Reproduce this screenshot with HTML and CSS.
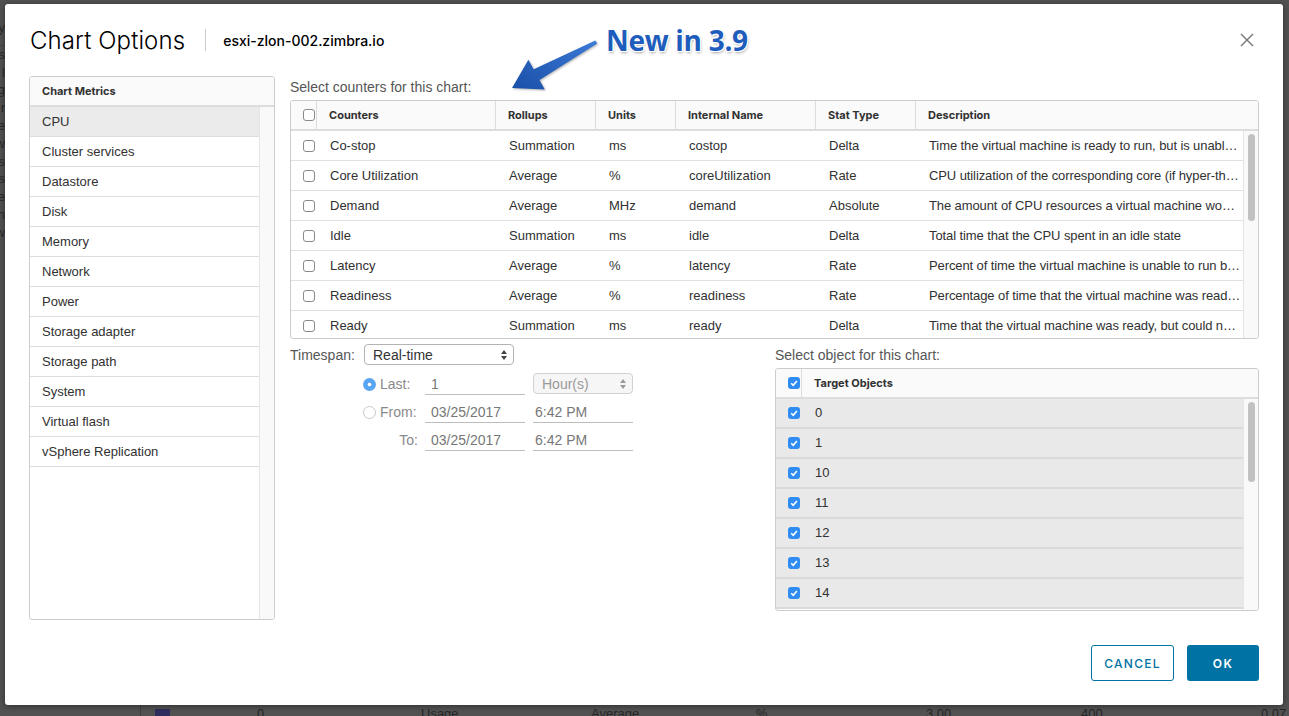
FILE: index.html
```html
<!DOCTYPE html>
<html lang="en">

<head>
    <meta charset="UTF-8">
    <title>Chart Options</title>
    <link rel="stylesheet" href="styles.css">
</head>

<body>
    <!-- page behind the dialog -->
    <div class="page">
        <div class="page-nav">
            <span class="nav-top">y</span>
            <span>s</span><span>l</span><span>g</span><span>r</span><span>e</span><span>w</span>
            <span>s</span><span>s</span><span>e</span><span>n</span><span>w</span>
        </div>
        <div class="page-row">
            <span><i class="swatch"></i></span>
            <span>0</span>
            <span>Usage</span>
            <span>Average</span>
            <span>%</span>
            <span>3.00</span>
            <span>400</span>
            <span>0.07</span>
        </div>
    </div>

    <div class="modal">
        <div class="modal-header">
            <h1>Chart Options</h1>
            <span class="divider"></span>
            <span class="host">esxi-zlon-002.zimbra.io</span>
            <span class="close">
                <svg width="14" height="14" viewBox="0 0 14 14"><path d="M1 1 L13 13 M13 1 L1 13" stroke="#737373" stroke-width="1.4" fill="none"/></svg>
            </span>
        </div>

        <div class="modal-body">
            <div class="metrics">
                <div class="metrics-head">Chart Metrics</div>
                <div class="metrics-body">
                    <ul class="metrics-list">
                        <li class="active">CPU</li>
                        <li>Cluster services</li>
                        <li>Datastore</li>
                        <li>Disk</li>
                        <li>Memory</li>
                        <li>Network</li>
                        <li>Power</li>
                        <li>Storage adapter</li>
                        <li>Storage path</li>
                        <li>System</li>
                        <li>Virtual flash</li>
                        <li>vSphere Replication</li>
                    </ul>
                    <div class="track"></div>
                </div>
            </div>

            <div class="options">
                <div class="section-label">Select counters for this chart:</div>
                <div class="grid counters">
                    <div class="grid-head">
                        <div class="cell"><span class="cb"></span></div>
                        <div class="cell">Counters</div>
                        <div class="cell">Rollups</div>
                        <div class="cell">Units</div>
                        <div class="cell">Internal Name</div>
                        <div class="cell">Stat Type</div>
                        <div class="cell">Description</div>
                    </div>
                    <div class="grid-body">
                        <div class="grid-rows">
                            <div class="row">
                                <div class="cell"><span class="cb"></span></div>
                                <div class="cell">Co-stop</div>
                                <div class="cell">Summation</div>
                                <div class="cell">ms</div>
                                <div class="cell">costop</div>
                                <div class="cell">Delta</div>
                                <div class="cell desc">Time the virtual machine is ready to run, but is unable to run due to co-scheduling constraints</div>
                            </div>
                            <div class="row">
                                <div class="cell"><span class="cb"></span></div>
                                <div class="cell">Core Utilization</div>
                                <div class="cell">Average</div>
                                <div class="cell">%</div>
                                <div class="cell">coreUtilization</div>
                                <div class="cell">Rate</div>
                                <div class="cell desc">CPU utilization of the corresponding core (if hyper-threading is enabled)</div>
                            </div>
                            <div class="row">
                                <div class="cell"><span class="cb"></span></div>
                                <div class="cell">Demand</div>
                                <div class="cell">Average</div>
                                <div class="cell">MHz</div>
                                <div class="cell">demand</div>
                                <div class="cell">Absolute</div>
                                <div class="cell desc">The amount of CPU resources a virtual machine would use if there were no CPU contention</div>
                            </div>
                            <div class="row">
                                <div class="cell"><span class="cb"></span></div>
                                <div class="cell">Idle</div>
                                <div class="cell">Summation</div>
                                <div class="cell">ms</div>
                                <div class="cell">idle</div>
                                <div class="cell">Delta</div>
                                <div class="cell desc">Total time that the CPU spent in an idle state</div>
                            </div>
                            <div class="row">
                                <div class="cell"><span class="cb"></span></div>
                                <div class="cell">Latency</div>
                                <div class="cell">Average</div>
                                <div class="cell">%</div>
                                <div class="cell">latency</div>
                                <div class="cell">Rate</div>
                                <div class="cell desc">Percent of time the virtual machine is unable to run because it is contending for access to the physical CPU(s)</div>
                            </div>
                            <div class="row">
                                <div class="cell"><span class="cb"></span></div>
                                <div class="cell">Readiness</div>
                                <div class="cell">Average</div>
                                <div class="cell">%</div>
                                <div class="cell">readiness</div>
                                <div class="cell">Rate</div>
                                <div class="cell desc">Percentage of time that the virtual machine was ready, but could not get scheduled to run</div>
                            </div>
                            <div class="row">
                                <div class="cell"><span class="cb"></span></div>
                                <div class="cell">Ready</div>
                                <div class="cell">Summation</div>
                                <div class="cell">ms</div>
                                <div class="cell">ready</div>
                                <div class="cell">Delta</div>
                                <div class="cell desc">Time that the virtual machine was ready, but could not get scheduled to run</div>
                            </div>
                        </div>
                        <div class="track"><div class="thumb counters-thumb"></div></div>
                    </div>
                </div>

                <div class="lower">
                    <div class="timespan">
                        <div class="ts-head">
                            <span class="ts-label">Timespan:</span>
                            <span class="select">Real-time
                                <svg width="6" height="10" viewBox="0 0 6 10"><path d="M0 4 L3 0 L6 4 Z M0 6 L3 10 L6 6 Z" fill="#444"/></svg>
                            </span>
                        </div>
                        <div class="ts-row">
                            <span class="opt"><span class="radio on"></span>Last:</span>
                            <span class="field">1</span>
                            <span class="select off">Hour(s)
                                <svg width="6" height="10" viewBox="0 0 6 10"><path d="M0 4 L3 0 L6 4 Z M0 6 L3 10 L6 6 Z" fill="#9a9a9a"/></svg>
                            </span>
                        </div>
                        <div class="ts-row">
                            <span class="opt"><span class="radio"></span>From:</span>
                            <span class="field">03/25/2017</span>
                            <span class="field time">6:42 PM</span>
                        </div>
                        <div class="ts-row">
                            <span class="opt to">To:</span>
                            <span class="field">03/25/2017</span>
                            <span class="field time">6:42 PM</span>
                        </div>
                    </div>

                    <div class="targets">
                        <div class="section-label">Select object for this chart:</div>
                        <div class="grid objects">
                            <div class="grid-head">
                                <div class="cell"><span class="cb checked"><svg width="12" height="12" viewBox="0 0 12 12"><path d="M3.2 6.3 L5.2 8.3 L8.9 3.9" stroke="#fff" stroke-width="1.6" fill="none"/></svg></span></div>
                                <div class="cell">Target Objects</div>
                            </div>
                            <div class="grid-body">
                                <div class="grid-rows">
                                    <div class="row"><div class="cell"><span class="cb checked"><svg width="12" height="12" viewBox="0 0 12 12"><path d="M3.2 6.3 L5.2 8.3 L8.9 3.9" stroke="#fff" stroke-width="1.6" fill="none"/></svg></span></div><div class="cell">0</div></div>
                                    <div class="row"><div class="cell"><span class="cb checked"><svg width="12" height="12" viewBox="0 0 12 12"><path d="M3.2 6.3 L5.2 8.3 L8.9 3.9" stroke="#fff" stroke-width="1.6" fill="none"/></svg></span></div><div class="cell">1</div></div>
                                    <div class="row"><div class="cell"><span class="cb checked"><svg width="12" height="12" viewBox="0 0 12 12"><path d="M3.2 6.3 L5.2 8.3 L8.9 3.9" stroke="#fff" stroke-width="1.6" fill="none"/></svg></span></div><div class="cell">10</div></div>
                                    <div class="row"><div class="cell"><span class="cb checked"><svg width="12" height="12" viewBox="0 0 12 12"><path d="M3.2 6.3 L5.2 8.3 L8.9 3.9" stroke="#fff" stroke-width="1.6" fill="none"/></svg></span></div><div class="cell">11</div></div>
                                    <div class="row"><div class="cell"><span class="cb checked"><svg width="12" height="12" viewBox="0 0 12 12"><path d="M3.2 6.3 L5.2 8.3 L8.9 3.9" stroke="#fff" stroke-width="1.6" fill="none"/></svg></span></div><div class="cell">12</div></div>
                                    <div class="row"><div class="cell"><span class="cb checked"><svg width="12" height="12" viewBox="0 0 12 12"><path d="M3.2 6.3 L5.2 8.3 L8.9 3.9" stroke="#fff" stroke-width="1.6" fill="none"/></svg></span></div><div class="cell">13</div></div>
                                    <div class="row"><div class="cell"><span class="cb checked"><svg width="12" height="12" viewBox="0 0 12 12"><path d="M3.2 6.3 L5.2 8.3 L8.9 3.9" stroke="#fff" stroke-width="1.6" fill="none"/></svg></span></div><div class="cell">14</div></div>
                                </div>
                                <div class="track"><div class="thumb objects-thumb"></div></div>
                            </div>
                        </div>
                    </div>
                </div>
            </div>
        </div>

        <div class="modal-footer">
            <button class="btn btn-outline">CANCEL</button>
            <button class="btn btn-primary">OK</button>
        </div>
    </div>

    <!-- "new" callout drawn over the dialog -->
    <svg class="callout-arrow" viewBox="0 0 1289 716">
        <defs>
            <linearGradient id="arrowFill" x1="1" y1="0" x2="0" y2="1">
                <stop offset="0" stop-color="#3b7bd6"/>
                <stop offset="1" stop-color="#1a4fa8"/>
            </linearGradient>
        </defs>
        <polygon points="595.3,40.4 533.7,69.3 528.4,59.7 512,88 544.8,89.5 539.5,79.9 597.2,43.6" fill="url(#arrowFill)"/>
    </svg>
    <div class="callout-text">New in 3.9</div>
</body>

</html>
```

FILE: styles.css
```css
* {
    box-sizing: border-box;
}

html,
body {
    margin: 0;
    height: 100%;
}

body {
    position: relative;
    overflow: hidden;
    font-family: "Liberation Sans", Arial, sans-serif;
    font-size: 13px;
    color: #313131;
    background: #525252;
}

/* background page */

.page {
    height: 716px;
    display: flex;
    flex-direction: column;
    justify-content: space-between;
}

.page-nav {
    width: 5px;
    overflow: hidden;
    display: flex;
    flex-direction: column;
    align-items: flex-end;
    padding-top: 19px;
    color: #2a2a2a;
    line-height: 17.8px;
}

.page-nav .nav-top {
    padding-bottom: 8px;
    border-bottom: 1px solid #464646;
}

.page-row {
    margin-left: 140px;
    height: 11px;
    border-left: 1px solid #3f3f3f;
    display: grid;
    grid-template-columns: 116px 164px 170px 165px 170px 155px 180px auto;
    color: #262626;
    line-height: 18px;
}

.swatch {
    display: inline-block;
    width: 15px;
    height: 12px;
    margin-left: 14px;
    margin-top: 4px;
    background: #2f2d5e;
}

/* dialog */

.modal {
    position: absolute;
    left: 5px;
    top: 4px;
    width: 1278px;
    height: 701px;
    padding: 0 24px 24px;
    background: #fff;
    border-radius: 3px;
    box-shadow: 0 1px 6px rgba(0, 0, 0, 0.45);
    display: flex;
    flex-direction: column;
}

.modal-header {
    height: 72px;
    flex: none;
    display: flex;
    align-items: center;
    padding-left: 1px;
    font-family: Inter, sans-serif;
}

.modal-header h1 {
    margin: 0;
    font-size: 24px;
    font-weight: 300;
    letter-spacing: 0.1px;
    color: #000;
}

.divider {
    width: 1px;
    height: 22px;
    margin: 0 17px 0 20px;
    background: #ccc;
}

.host {
    font-size: 14px;
    font-weight: 500;
    color: #000;
}

.close {
    margin-left: auto;
    margin-right: 5px;
    display: flex;
}

.modal-body {
    height: 544px;
    flex: none;
    display: flex;
    gap: 15px;
}

/* chart metrics list */

.metrics {
    width: 246px;
    border: 1px solid #ccc;
    border-radius: 3px;
    display: flex;
    flex-direction: column;
    overflow: hidden;
}

.metrics-head {
    height: 30px;
    flex: none;
    padding-left: 12px;
    line-height: 28px;
    font-family: Inter, sans-serif;
    font-size: 11px;
    font-weight: 700;
    background: #fafafa;
    border-bottom: 2px solid #ddd;
}

.metrics-body {
    flex: 1;
    display: flex;
}

.metrics-list {
    flex: 1;
    margin: 0;
    padding: 0;
    list-style: none;
}

.metrics-list li {
    height: 30px;
    line-height: 29px;
    padding-left: 12px;
    border-bottom: 1px solid #ddd;
}

.metrics-list li.active {
    background: #ebebeb;
}

.track {
    width: 15px;
    flex: none;
    background: #f9f9f9;
    border-left: 1px solid #e6e6e6;
}

.thumb {
    width: 7px;
    margin: 3px 0 0 4px;
    border-radius: 4px;
    background: #c1c1c1;
}

.counters-thumb {
    height: 87px;
}

.objects-thumb {
    height: 80px;
}

/* right side */

.options {
    flex: 1;
    display: flex;
    flex-direction: column;
}

.section-label {
    margin: 1px 0 3px;
    line-height: 20px;
    font-size: 14px;
    color: #565656;
}

.grid {
    border: 1px solid #ccc;
    border-radius: 3px;
    display: flex;
    flex-direction: column;
    overflow: hidden;
}

.counters {
    height: 239px;
}

.grid-head,
.row {
    display: grid;
}

.counters .grid-head,
.counters .row {
    grid-template-columns: 26px 179px 100px 80px 140px 100px 1fr;
}

.grid-head {
    height: 30px;
    flex: none;
    background: #fafafa;
    border-bottom: 2px solid #ddd;
    font-family: Inter, sans-serif;
    font-size: 11px;
    font-weight: 700;
}

.grid-head .cell {
    line-height: 28px;
    border-right: 1px solid #ddd;
}

.grid-head .cell:last-child {
    border-right: 0;
}

.cell {
    padding: 0 12px;
    white-space: nowrap;
    overflow: hidden;
    text-overflow: ellipsis;
    display: flex;
    align-items: center;
}

.row .cell {
    padding-left: 13px;
}

.row .cell:first-child {
    padding-left: 12px;
}

.cell .cb {
    flex: none;
}

.cell.desc {
    display: block;
    padding-right: 1px;
    letter-spacing: -0.1px;
}

.grid-body {
    flex: 1;
    display: flex;
    overflow: hidden;
}

.grid-rows {
    flex: 1;
    min-width: 0;
}

.row {
    height: 30px;
    border-bottom: 1px solid #e0e0e0;
    line-height: 29px;
}

.cb {
    width: 12px;
    height: 12px;
    border: 1px solid #8a8a8a;
    border-radius: 3px;
    background: #fff;
    display: inline-block;
}

.cb.checked {
    border: 0;
    background: #2e8cf2;
}

.cb svg {
    display: block;
}

/* timespan + target objects */

.lower {
    margin-top: 5px;
    display: flex;
    justify-content: space-between;
    font-size: 14px;
}

.timespan {
    width: 344px;
}

.ts-head {
    display: flex;
    align-items: center;
    height: 21px;
}

.ts-label {
    width: 74px;
    color: #565656;
}

.select {
    width: 150px;
    height: 21px;
    padding: 0 6px 0 8px;
    border: 1px solid #b3b3b3;
    border-radius: 4px;
    background: #fff;
    display: flex;
    align-items: center;
    justify-content: space-between;
    color: #333;
}

.select.off {
    width: 100px;
    margin-left: 8px;
    padding-left: 8px;
    border-color: #d2d2d2;
    background: #f6f6f6;
    color: #9a9a9a;
    align-self: flex-start;
}

.ts-row {
    height: 22px;
    margin: 6px 0 0 73px;
    display: flex;
    align-items: center;
}

.ts-head + .ts-row {
    margin-top: 8px;
}

.opt {
    width: 62px;
    display: flex;
    align-items: center;
    gap: 4px;
    color: #8a8a8a;
}

.opt.to {
    justify-content: flex-end;
    padding-right: 7px;
}

.radio {
    width: 13px;
    height: 13px;
    border: 1px solid #c8c8c8;
    border-radius: 50%;
    background: #fff;
}

.radio.on {
    border: 0;
    background: radial-gradient(circle, #fff 0 1.6px, #5aa5f2 2.2px);
}

.field {
    width: 100px;
    height: 22px;
    padding-left: 6px;
    line-height: 23px;
    border-bottom: 1px solid #bdbdbd;
    color: #777;
}

.field.time {
    margin-left: 8px;
    padding-left: 2px;
}

.targets {
    width: 484px;
}

.objects {
    height: 243px;
    font-size: 13px;
}

.objects .grid-head,
.objects .row {
    grid-template-columns: 26px 1fr;
}

.objects .row {
    background: #e9e9e9;
    border-bottom: 2px solid #dadada;
    line-height: 28px;
}

/* footer */

.modal-footer {
    margin-top: auto;
    display: flex;
    justify-content: flex-end;
    gap: 13px;
}

.btn {
    height: 36px;
    border-radius: 3px;
    font-family: Inter, sans-serif;
    font-size: 12px;
    letter-spacing: 1.3px;
    cursor: pointer;
}

.btn-outline {
    width: 83px;
    border: 1px solid #0072a3;
    background: #fff;
    color: #0072a3;
    font-weight: 500;
}

.btn-primary {
    width: 72px;
    border: 0;
    background: #0072a3;
    color: #fff;
    font-weight: 600;
}

/* callout annotation */

.callout-arrow {
    position: absolute;
    left: 0;
    top: 0;
    width: 1289px;
    height: 716px;
    pointer-events: none;
    filter: drop-shadow(1px 1px 1px rgba(0, 0, 0, 0.3));
}

.callout-text {
    position: absolute;
    left: 606px;
    top: 21px;
    font-family: "Open Sans", sans-serif;
    font-size: 28px;
    font-weight: 700;
    letter-spacing: -0.3px;
    color: #1f5dbd;
    text-shadow: 1px 0 0 #fff, -1px 0 0 #fff, 0 1px 0 #fff, 0 -1px 0 #fff,
        1px 1px 0 #fff, -1px -1px 0 #fff, 1px -1px 0 #fff, -1px 1px 0 #fff,
        1px 2px 3px rgba(0, 0, 0, 0.35);
}
```
